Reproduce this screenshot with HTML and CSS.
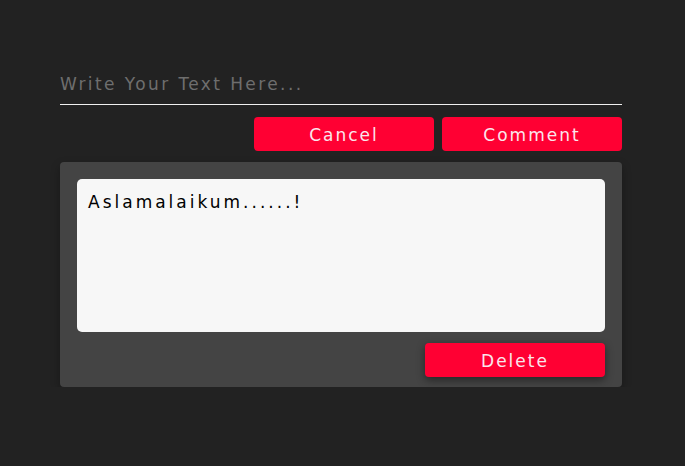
FILE: index.html
```html
<!DOCTYPE html>
<html>
<head>
<meta charset="utf-8">
<link rel="stylesheet" href="styles.css">
</head>
<body>
<div class="wrap">
  <input class="input" type="text" placeholder="Write Your Text Here...">
  <div class="actions">
    <button class="btn">Cancel</button>
    <button class="btn">Comment</button>
  </div>
  <div class="card">
    <div class="comment">Aslamalaikum......!</div>
    <div class="card-actions">
      <button class="btn btn-shadow">Delete</button>
    </div>
  </div>
</div>
</body>
</html>
```
FILE: styles.css
```css
html, body {
  margin: 0;
  padding: 0;
  background: #222222;
  font-family: "DejaVu Sans", Verdana, sans-serif;
}
.wrap {
  width: 562px;
  padding-top: 64px;
  margin-left: 60px;
}
.input {
  display: block;
  width: 100%;
  box-sizing: border-box;
  background: transparent;
  border: none;
  border-bottom: 1px solid #f0f0f0;
  outline: none;
  padding: 9px 0 10px;
  font-family: inherit;
  font-size: 17px;
  letter-spacing: 2.4px;
  color: #ddd;
  height: 41px;
}
.input::placeholder {
  color: #6e6e6e;
}
.actions {
  display: flex;
  justify-content: flex-end;
  gap: 8px;
  margin-top: 12px;
}
.btn {
  width: 180px;
  height: 34px;
  border: none;
  border-radius: 4px;
  background: #ff0033;
  color: #fbe6ec;
  font-family: inherit;
  font-size: 17px;
  letter-spacing: 2px;
  padding: 1px 0 0;
}
.btn-shadow {
  box-shadow: 0 3px 8px rgba(0,0,0,0.45);
}
.card {
  margin-top: 11px;
  background: #444444;
  border-radius: 4px;
  padding: 17px 17px 10px;
  box-shadow: 0 4px 10px rgba(0,0,0,0.3);
}
.comment {
  background: #f7f7f7;
  border-radius: 5px;
  height: 153px;
  box-sizing: border-box;
  padding: 13px 11px;
  font-size: 17px;
  letter-spacing: 3px;
  color: #000;
}
.card-actions {
  display: flex;
  justify-content: flex-end;
  margin-top: 11px;
}
```
